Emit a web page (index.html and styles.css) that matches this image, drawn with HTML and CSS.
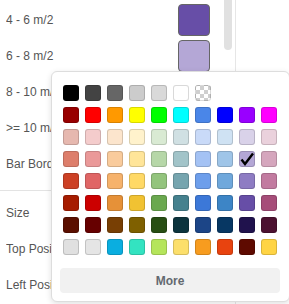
FILE: index.html
```html
<!DOCTYPE html>
<html lang="en">
<head>
    <meta charset="UTF-8">
    <meta name="viewport" content="width=device-width, initial-scale=1.0">
    <title>Legend Settings</title>
    <link rel="stylesheet" href="styles.css">
</head>
<body>

<div class="panel">
    <div class="rows">
        <!-- Legend colours -->
        <div class="section">
            <div class="row"><span class="label">4 - 6 m/2</span><span class="color-box" style="background:#674ea7"></span></div>
            <div class="row"><span class="label">6 - 8 m/2</span><span class="color-box" style="background:#b4a7d6"></span></div>
            <div class="row"><span class="label">8 - 10 m/2</span></div>
            <div class="row"><span class="label">&gt;= 10 m/2</span></div>
            <div class="row"><span class="label">Bar Border Color</span></div>
        </div>
        <!-- Position -->
        <div class="section section-last">
            <div class="row"><span class="label">Size</span></div>
            <div class="row"><span class="label">Top Position</span></div>
            <div class="row"><span class="label">Left Position</span></div>
        </div>
    </div>
    <div class="scroll-track">
        <div class="scroll-thumb"></div>
    </div>
</div>

<!-- Colour picker popup -->
<div class="picker">
    <div class="palette-row">
        <span class="swatch" style="background:#000000"></span>
        <span class="swatch" style="background:#434343"></span>
        <span class="swatch" style="background:#666666"></span>
        <span class="swatch" style="background:#cccccc"></span>
        <span class="swatch" style="background:#d9d9d9"></span>
        <span class="swatch" style="background:#ffffff"></span>
        <span class="swatch swatch-transparent"></span>
    </div>
    <div class="palette-row">
        <span class="swatch" style="background:#980000"></span>
        <span class="swatch" style="background:#ff0000"></span>
        <span class="swatch" style="background:#ff9900"></span>
        <span class="swatch" style="background:#ffff00"></span>
        <span class="swatch" style="background:#00ff00"></span>
        <span class="swatch" style="background:#00ffff"></span>
        <span class="swatch" style="background:#4a86e8"></span>
        <span class="swatch" style="background:#0000ff"></span>
        <span class="swatch" style="background:#9900ff"></span>
        <span class="swatch" style="background:#ff00ff"></span>
    </div>
    <div class="palette-row">
        <span class="swatch" style="background:#e6b8af"></span>
        <span class="swatch" style="background:#f4cccc"></span>
        <span class="swatch" style="background:#fce5cd"></span>
        <span class="swatch" style="background:#fff2cc"></span>
        <span class="swatch" style="background:#d9ead3"></span>
        <span class="swatch" style="background:#d0e0e3"></span>
        <span class="swatch" style="background:#c9daf8"></span>
        <span class="swatch" style="background:#cfe2f3"></span>
        <span class="swatch" style="background:#d9d2e9"></span>
        <span class="swatch" style="background:#ead1dc"></span>
    </div>
    <div class="palette-row">
        <span class="swatch" style="background:#dd7e6b"></span>
        <span class="swatch" style="background:#ea9999"></span>
        <span class="swatch" style="background:#f9cb9c"></span>
        <span class="swatch" style="background:#ffe599"></span>
        <span class="swatch" style="background:#b6d7a8"></span>
        <span class="swatch" style="background:#a2c4c9"></span>
        <span class="swatch" style="background:#a4c2f4"></span>
        <span class="swatch" style="background:#9fc5e8"></span>
        <span class="swatch selected" style="background:#b4a7d6">
            <svg width="14" height="14" viewBox="0 0 14 14"><path d="M1.5 7.5 L5 12 L13 1.5" fill="none" stroke="#000" stroke-width="2.4"/></svg>
        </span>
        <span class="swatch" style="background:#d5a6bd"></span>
    </div>
    <div class="palette-row">
        <span class="swatch" style="background:#cc4125"></span>
        <span class="swatch" style="background:#e06666"></span>
        <span class="swatch" style="background:#f6b26b"></span>
        <span class="swatch" style="background:#ffd966"></span>
        <span class="swatch" style="background:#93c47d"></span>
        <span class="swatch" style="background:#76a5af"></span>
        <span class="swatch" style="background:#6d9eeb"></span>
        <span class="swatch" style="background:#6fa8dc"></span>
        <span class="swatch" style="background:#8e7cc3"></span>
        <span class="swatch" style="background:#c27ba0"></span>
    </div>
    <div class="palette-row">
        <span class="swatch" style="background:#a61c00"></span>
        <span class="swatch" style="background:#cc0000"></span>
        <span class="swatch" style="background:#e69138"></span>
        <span class="swatch" style="background:#f1c232"></span>
        <span class="swatch" style="background:#6aa84f"></span>
        <span class="swatch" style="background:#45818e"></span>
        <span class="swatch" style="background:#3c78d8"></span>
        <span class="swatch" style="background:#3d85c6"></span>
        <span class="swatch" style="background:#674ea7"></span>
        <span class="swatch" style="background:#a64d79"></span>
    </div>
    <div class="palette-row">
        <span class="swatch" style="background:#5b0f00"></span>
        <span class="swatch" style="background:#660000"></span>
        <span class="swatch" style="background:#783f04"></span>
        <span class="swatch" style="background:#7f6000"></span>
        <span class="swatch" style="background:#274e13"></span>
        <span class="swatch" style="background:#0c343d"></span>
        <span class="swatch" style="background:#1c4587"></span>
        <span class="swatch" style="background:#073763"></span>
        <span class="swatch" style="background:#20124d"></span>
        <span class="swatch" style="background:#4c1130"></span>
    </div>
    <div class="palette-row">
        <span class="swatch" style="background:#e0e0e0"></span>
        <span class="swatch" style="background:#e5e5e5"></span>
        <span class="swatch" style="background:#0aaee0"></span>
        <span class="swatch" style="background:#33e3c1"></span>
        <span class="swatch" style="background:#b5e55b"></span>
        <span class="swatch" style="background:#fcdf6b"></span>
        <span class="swatch" style="background:#f79c1f"></span>
        <span class="swatch" style="background:#e8430f"></span>
        <span class="swatch" style="background:#5e0a00"></span>
        <span class="swatch" style="background:#ffd444"></span>
    </div>
    <button class="more-button">More</button>
</div>

</body>
</html>
```

FILE: styles.css
```css
/* General */
* {
    margin: 0;
    padding: 0;
    box-sizing: border-box;
}
body {
    font-family: "Liberation Sans", Arial, sans-serif;
    font-size: 12px;
    color: #555;
    background: #fff;
    overflow: hidden;
    height: 304px;
}

/* Settings panel */
.panel {
    display: flex;
    width: 236px;
    height: 304px;
    border-right: 1px solid #e6e6e6;
}
.rows {
    width: 222px;
}
.section {
    padding: 2px 0 8px;
    border-bottom: 1px solid #e3e3e3;
}
.section-last {
    padding: 4px 0 0;
    border-bottom: none;
}
.row {
    display: flex;
    align-items: center;
    height: 36px;
    padding: 0 12px 0 6px;
}
.label {
    flex-grow: 1;
    white-space: nowrap;
    overflow: hidden;
}
.color-box {
    width: 32px;
    height: 32px;
    border: 1px solid #666;
    border-radius: 4px;
    flex-shrink: 0;
}
.scroll-track {
    width: 13px;
    padding-left: 2px;
}
.scroll-thumb {
    width: 8px;
    height: 50px;
    background: #e1e1e1;
    border-radius: 0 0 4px 4px;
}

/* Colour picker */
.picker {
    position: absolute;
    left: 51px;
    top: 71px;
    width: 239px;
    padding: 10px 8px 8px;
    background: #fff;
    border: 1px solid #ddd;
    border-radius: 6px;
    box-shadow: 0 2px 6px rgba(0, 0, 0, 0.12);
}
.palette-row {
    display: flex;
    height: 22px;
}
.swatch {
    display: flex;
    align-items: center;
    justify-content: center;
    width: 16px;
    height: 16px;
    margin: 3px;
    border: 1px solid rgba(0, 0, 0, 0.15);
    border-radius: 3px;
}
.swatch-transparent {
    background: repeating-conic-gradient(#cfcfcf 0 25%, #fff 0 50%) 0 0 / 8px 8px;
}
.more-button {
    display: block;
    width: 220px;
    height: 25px;
    margin-top: 10px;
    background: #f1f1f1;
    border: none;
    border-radius: 4px;
    font-family: "Liberation Sans", Arial, sans-serif;
    font-size: 12px;
    font-weight: bold;
    color: #636970;
    cursor: pointer;
}
```
